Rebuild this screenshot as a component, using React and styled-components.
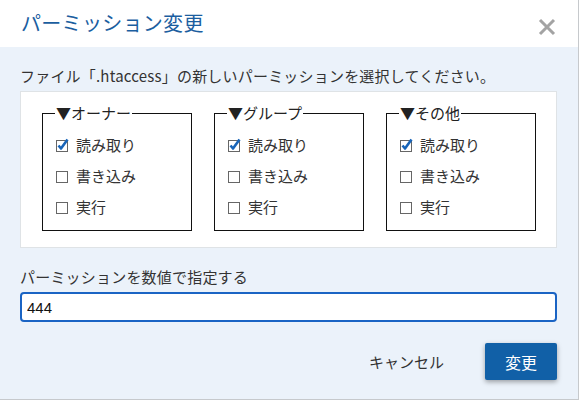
import React from 'react';
import styled, { createGlobalStyle } from 'styled-components';

const GlobalStyle = createGlobalStyle`
    html, body {
        margin: 0;
        padding: 0;
        background: #ffffff;
    }
    body {
        font-family: 'Noto Sans CJK JP', 'Noto Sans', sans-serif;
        color: #333;
    }
`;

const Dialog = styled.div`
    width: 579px;
    height: 400px;
    box-sizing: border-box;
    border-right: 1px solid #c6c9cc;
    border-bottom: 1px solid #c6c9cc;
    display: flex;
    flex-direction: column;
    background: #ebf2fa;
`;

const Header = styled.div`
    height: 47px;
    flex: none;
    background: #fff;
    display: flex;
    align-items: center;
    justify-content: space-between;
    padding: 0 22px 0 21px;
    box-sizing: border-box;
`;

const Title = styled.h1`
    margin: 0;
    font-size: 20px;
    font-weight: 400;
    color: #1b5e9f;
    line-height: 24px;
    letter-spacing: 0.3px;
    padding-bottom: 2px;
`;

const CloseButton = styled.button`
    border: none;
    background: none;
    padding: 0;
    width: 18px;
    height: 18px;
    cursor: pointer;
    display: flex;
    margin-top: 6px;
`;

const Body = styled.div`
    flex: 1;
    padding: 19px 21px 0 20px;
    display: flex;
    flex-direction: column;
`;

const Text = styled.p`
    margin: 0;
    font-size: 15px;
    line-height: 20px;
    color: #333;
    letter-spacing: 0.2px;
`;

const Panel = styled.div`
    margin-top: 5px;
    background: #fff;
    border: 1px solid #dfe3e6;
    padding: 11px 20px 16px 21px;
    display: grid;
    grid-template-columns: repeat(3, 150px);
    column-gap: 22px;
`;

const Group = styled.fieldset`
    margin: 0;
    border: 1px solid #111;
    padding: 6px 12px 8px 12px;
    min-width: 0;
`;

const Legend = styled.legend`
    padding: 0 1px;
    font-size: 15px;
    line-height: 20px;
    color: #222;
`;

const Option = styled.label`
    display: flex;
    align-items: center;
    gap: 7px;
    height: 31px;
    font-size: 15px;
    color: #333;
`;

const Label = styled(Text)`
    margin-top: 19px;
`;

const NumberInput = styled.input`
    margin-top: 5px;
    height: 30px;
    box-sizing: border-box;
    border: 2px solid #1a64c4;
    border-radius: 4px;
    outline: none;
    padding: 0 5px;
    font-family: 'Liberation Sans', Arial, sans-serif;
    font-size: 15px;
    color: #111;
    background: #fff;
`;

const Actions = styled.div`
    margin-top: 21px;
    display: flex;
    justify-content: flex-end;
    align-items: center;
    gap: 21px;
`;

const CancelButton = styled.button`
    border: none;
    background: none;
    font-family: inherit;
    font-size: 15px;
    color: #333;
    padding: 0 20px;
    height: 37px;
    cursor: pointer;
`;

const SubmitButton = styled.button`
    width: 72px;
    height: 37px;
    border: none;
    border-radius: 2px;
    background: #1160a7;
    color: #fff;
    font-family: inherit;
    font-size: 16px;
    box-shadow: 0 2px 5px rgba(0, 0, 0, 0.35);
    cursor: pointer;
`;

const CloseIcon = () => (
    <svg width="18" height="18" viewBox="0 0 18 18">
        <path d="M2 2 L16 16 M16 2 L2 16" stroke="#a3a3a3" strokeWidth="3" />
    </svg>
);

const Box = ({ checked }) => (
    <svg width="14" height="16" viewBox="0 0 14 16" style={{ flex: 'none' }}>
        <rect x="1.5" y="3.5" width="11" height="11" fill="#fff" stroke="#666" strokeWidth="1" />
        {checked && (
            <path
                d="M3.5 8.5 L6 11.5 L12.5 2.5"
                fill="none"
                stroke="#1864b8"
                strokeWidth="2.6"
                strokeLinejoin="round"
            />
        )}
    </svg>
);

const groups = ['▼オーナー', '▼グループ', '▼その他'];
const options = [
    { label: '読み取り', checked: true },
    { label: '書き込み', checked: false },
    { label: '実行', checked: false },
];

const App = () => {
    return (
        <>
            <GlobalStyle />
            <Dialog>
                <Header>
                    <Title>パーミッション変更</Title>
                    <CloseButton aria-label="close">
                        <CloseIcon />
                    </CloseButton>
                </Header>
                <Body>
                    <Text>ファイル「.htaccess」の新しいパーミッションを選択してください。</Text>
                    <Panel>
                        {groups.map((g) => (
                            <Group key={g}>
                                <Legend>{g}</Legend>
                                {options.map((o) => (
                                    <Option key={o.label}>
                                        <Box checked={o.checked} />
                                        {o.label}
                                    </Option>
                                ))}
                            </Group>
                        ))}
                    </Panel>
                    <Label>パーミッションを数値で指定する</Label>
                    <NumberInput type="text" defaultValue="444" />
                    <Actions>
                        <CancelButton>キャンセル</CancelButton>
                        <SubmitButton>変更</SubmitButton>
                    </Actions>
                </Body>
            </Dialog>
        </>
    );
};

export default App;
